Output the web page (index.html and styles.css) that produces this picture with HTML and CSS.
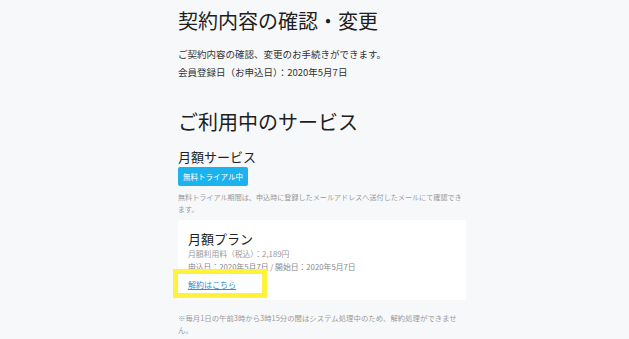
FILE: index.html
```html
<!DOCTYPE html>
<html>
<head>
    <meta charset="utf-8" />
    <title>契約内容の確認・変更</title>
    <meta name="viewport" content="width=device-width, initial-scale=1">
    <link rel="stylesheet" href="styles.css">
</head>
<body>
    <div id="page">
        <h1 class="title">契約内容の確認・変更</h1>
        <p class="lead">ご契約内容の確認、変更のお手続きができます。<br>会員登録日（お申込日）：2020年5月7日</p>

        <h2 class="title service-title">ご利用中のサービス</h2>
        <h3 class="sub">月額サービス</h3>
        <div class="badge">無料トライアル中</div>
        <p class="note">無料トライアル期間は、申込時に登録したメールアドレスへ送付したメールにて確認できます。</p>

        <div class="card">
            <div class="plan">月額プラン</div>
            <div class="meta">月額利用料（税込）：2,189円</div>
            <div class="meta dark">申込日：2020年5月7日 / 開始日：2020年5月7日</div>
            <a class="cancel" href="#">解約はこちら</a>
            <div class="mark"></div>
        </div>

        <p class="note foot">※毎月1日の午前3時から3時15分の間はシステム処理中のため、解約処理ができません。</p>
    </div>
</body>
</html>
```

FILE: styles.css
```css
html, body {
    margin: 0;
    background-color: #f7f8fa;
    font-family: "Noto Sans CJK JP", "Noto Sans", sans-serif;
    color: #222;
}

#page {
    width: 288px;
    padding: 9px 0 0 178px;
}

.title {
    margin: 0;
    font-size: 20px;
    line-height: 24px;
    font-weight: 400;
    color: #1e1e1e;
}

.lead {
    margin: 12px 0 0;
    font-size: 9.5px;
    line-height: 18px;
    color: #333;
}

.service-title {
    margin-top: 29px;
}

.sub {
    margin: 14px 0 0;
    font-size: 13px;
    line-height: 18px;
    font-weight: 400;
    color: #222;
}

.badge {
    width: fit-content;
    margin-top: 1px;
    padding: 0 5px;
    height: 19px;
    line-height: 19px;
    font-size: 7.5px;
    color: #fff;
    background-color: #1cb2ee;
    border-radius: 2px;
}

.note {
    margin: 4.5px 0 0;
    font-size: 7.1px;
    line-height: 12.5px;
    color: #9a9a9a;
}

.card {
    position: relative;
    margin-top: 4.5px;
    padding: 11px 10px 9.5px;
    background-color: #fff;
    border-radius: 3px;
}

    .card .plan {
        font-size: 13px;
        line-height: 16px;
        color: #222;
    }

    .card .meta {
        font-size: 7.8px;
        line-height: 13px;
        color: #999;
    }

    .card .dark {
        color: #888;
    }

    .card .cancel {
        display: block;
        width: fit-content;
        margin-top: 4.5px;
        font-size: 8px;
        line-height: 13px;
        color: #2f8fd8;
    }

    .card .mark {
        position: absolute;
        left: -5px;
        top: 49px;
        width: 84px;
        height: 19px;
        border: 5px solid #fff23a;
    }

.foot {
    margin-top: 12px;
    font-size: 7.4px;
    line-height: 11.5px;
}
```
